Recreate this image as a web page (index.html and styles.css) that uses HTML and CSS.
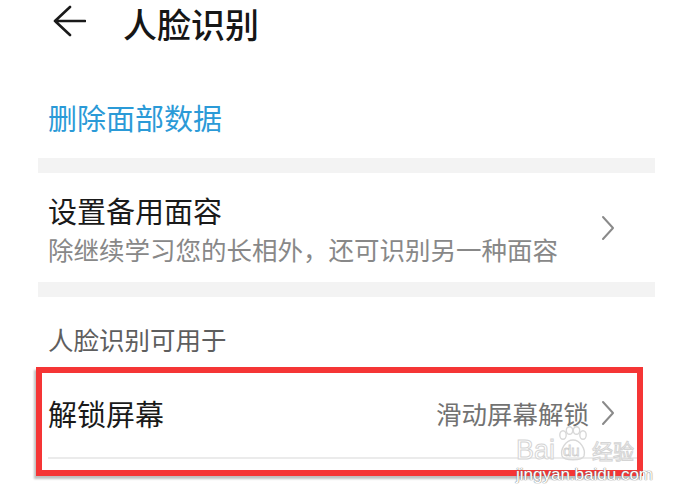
FILE: index.html
```html
<!DOCTYPE html>
<html lang="zh-CN">
<head>
    <meta charset="UTF-8">
    <meta name="viewport" content="width=device-width, initial-scale=1.0">
    <title>人脸识别</title>
    <link rel="stylesheet" href="styles.css">
</head>
<body>
    <div class="page">
        <div class="header">
            <svg class="back" width="34" height="34" viewBox="0 0 34 34">
                <path d="M18 3 L3 17 L18 31 M3 17 L33 17" fill="none" stroke="#1a1a1a" stroke-width="2.6" stroke-linecap="round" stroke-linejoin="round"/>
            </svg>
            <h1>人脸识别</h1>
        </div>

        <div class="action">删除面部数据</div>

        <div class="band"></div>

        <div class="item">
            <div class="item-text">
                <div class="item-title">设置备用面容</div>
                <div class="item-sub">除继续学习您的长相外，还可识别另一种面容</div>
            </div>
            <svg class="chev" width="14" height="26" viewBox="0 0 14 26">
                <path d="M2 2 L12 13 L2 24" fill="none" stroke="#8a8a8a" stroke-width="2" stroke-linecap="round" stroke-linejoin="round"/>
            </svg>
        </div>

        <div class="band"></div>

        <div class="section-label">人脸识别可用于</div>

        <div class="highlight">
            <div class="row">
                <span class="row-title">解锁屏幕</span>
                <span class="row-value">滑动屏幕解锁</span>
                <svg class="chev" width="14" height="26" viewBox="0 0 14 26">
                    <path d="M2 2 L12 13 L2 24" fill="none" stroke="#8a8a8a" stroke-width="2" stroke-linecap="round" stroke-linejoin="round"/>
                </svg>
            </div>
            <div class="divider"></div>
        </div>

        <!-- watermark over the corner -->
        <div class="watermark">
            <div class="wm-logo">
                <span class="wm-bai">Bai</span>
                <span class="wm-paw">
                    <svg width="32" height="36" viewBox="0 0 32 36">
                        <g fill="none" stroke="#d8d8d8" stroke-width="1.4">
                            <ellipse cx="6" cy="9" rx="3.2" ry="4.2"/>
                            <ellipse cx="12.5" cy="4.5" rx="3.2" ry="3.8"/>
                            <ellipse cx="19.5" cy="4.5" rx="3.2" ry="3.8"/>
                            <ellipse cx="26" cy="9" rx="3.2" ry="4.2"/>
                            <path d="M16 14 C9 14 3 23 5 30 C7 35 25 35 27 30 C29 23 23 14 16 14 Z"/>
                        </g>
                    </svg>
                    <span class="wm-du">du</span>
                </span>
                <span class="wm-jy">经验</span>
            </div>
            <div class="wm-url">jingyan.baidu.com</div>
        </div>
    </div>
</body>
</html>
```

FILE: styles.css
```css
* {
    margin: 0;
    padding: 0;
    box-sizing: border-box;
    font-family: "Noto Sans CJK SC", "Noto Sans", sans-serif;
}

body {
    background: #fff;
    width: 679px;
    height: 498px;
    overflow: hidden;
}

.page {
    position: relative;
    height: 498px;
}

.header {
    display: flex;
    align-items: center;
    height: 44px;
    padding: 4px 0 0 52px;
}

.header .back {
    flex-shrink: 0;
    margin-top: -6px;
}

.header h1 {
    margin-left: 37px;
    font-size: 34px;
    font-weight: 500;
    line-height: 40px;
    color: #161616;
}

.action {
    padding: 53px 0 21px 48px;
    font-size: 29px;
    line-height: 40px;
    color: #2b9ad7;
}

.band {
    height: 15px;
    margin-left: 38px;
    width: 617px;
    background: #f3f3f3;
}

.item {
    display: flex;
    align-items: center;
    margin-left: 38px;
    width: 617px;
    height: 109px;
    padding: 0 40px 0 10px;
}

.item-text {
    flex: 1;
}

.item-title {
    font-size: 29px;
    line-height: 36px;
    color: #1a1a1a;
}

.item-sub {
    margin-top: 6px;
    font-size: 25.5px;
    line-height: 30px;
    color: #888;
}

.section-label {
    padding: 25px 0 11px 48px;
    font-size: 25.5px;
    line-height: 34px;
    color: #5e5e5e;
}

.highlight {
    margin-left: 36px;
    width: 607px;
    height: 109px;
    border: 6px solid #f53535;
    box-shadow: -2px 3px 2px rgba(0, 0, 0, 0.25);
    padding-top: 20px;
}

.row {
    display: flex;
    align-items: center;
    height: 40px;
    padding: 0 22px 0 6px;
}

.row-title {
    flex: 1;
    font-size: 29px;
    line-height: 40px;
    color: #1a1a1a;
}

.row-value {
    font-size: 25.5px;
    line-height: 40px;
    color: #727272;
    margin-right: 12px;
}

.divider {
    margin: 24px 0 0 6px;
    height: 2px;
    background: #ebebeb;
}

.watermark {
    position: absolute;
    left: 516px;
    top: 422px;
    width: 130px;
}

.wm-logo {
    display: flex;
    align-items: flex-end;
    height: 40px;
}

.wm-bai {
    font-family: "Liberation Sans", sans-serif;
    font-size: 27px;
    line-height: 24px;
    color: #fff;
    -webkit-text-stroke: 1px #d4d4d4;
}

.wm-jy {
    font-size: 21px;
    line-height: 24px;
    margin-left: 3px;
    color: #fff;
    -webkit-text-stroke: 1px #d4d4d4;
}

.wm-paw {
    position: relative;
    width: 32px;
    height: 36px;
    margin-left: 2px;
}

.wm-du {
    position: absolute;
    left: 6px;
    bottom: 4px;
    font-family: "Liberation Sans", sans-serif;
    font-size: 15px;
    line-height: 15px;
    color: #fff;
    -webkit-text-stroke: 0.8px #cfcfcf;
}

.wm-url {
    margin-top: 5px;
    font-family: "Liberation Sans", sans-serif;
    font-size: 17px;
    line-height: 16px;
    color: #fff;
    text-shadow: 0 0 1px #777, 0 0 1px #777;
}
```
